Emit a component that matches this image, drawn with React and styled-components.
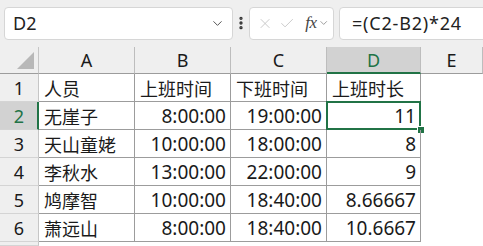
import React from "react";
import styled, { createGlobalStyle } from "styled-components";
import { ChevronDown, EllipsisVertical, X, Check } from "lucide-react";

const GlobalStyle = createGlobalStyle`
  html, body {
    margin: 0;
    padding: 0;
    background: #ffffff;
    overflow: hidden;
  }
  body {
    font-family: "Noto Sans", "Noto Sans CJK SC", sans-serif;
    color: #1a1a1a;
  }
`;

const GREEN = "#217346";
const GRID = "#9c9c9c";

const Page = styled.div`
  width: 483px;
  height: 246px;
  display: flex;
  flex-direction: column;
  background: #ffffff;
  overflow: hidden;
`;

// formula bar across the top
const Toolbar = styled.div`
  height: 47px;
  flex-shrink: 0;
  background: #efefef;
  display: flex;
  align-items: center;
  padding: 0 0 1px 4px;
  box-sizing: border-box;
`;

const Field = styled.div`
  height: 33px;
  box-sizing: border-box;
  background: #ffffff;
  border: 1px solid #d6d6d6;
  border-radius: 4px;
  display: flex;
  align-items: center;
  flex-shrink: 0;
`;

const NameBox = styled(Field)`
  width: 229px;
  padding: 0 7px 0 8px;
  justify-content: space-between;
  font-size: 18px;
  color: #222;
`;

const Dots = styled.div`
  width: 21px;
  display: flex;
  justify-content: center;
  color: #333;
`;

const FxBox = styled(Field)`
  width: 85px;
  padding: 0 4px 0 7px;
  gap: 6px;
  color: #c2c2c2;
`;

const Fx = styled.span`
  font-family: "Liberation Serif", "DejaVu Serif", serif;
  font-style: italic;
  font-size: 17px;
  color: #444;
  margin-left: 4px;
  letter-spacing: -0.5px;
`;

const FormulaBox = styled(Field)`
  width: 160px;
  margin-left: 5px;
  padding-left: 12px;
  font-size: 18px;
  letter-spacing: 0.8px;
  color: #222;
`;

// the sheet
const Sheet = styled.div`
  display: grid;
  grid-template-columns: 39px 96px 96px 96px 94px 1fr;
  grid-template-rows: 27px repeat(6, 28px) 1fr;
  flex: 1;
  min-height: 0;
  font-size: 18px;
`;

const Corner = styled.div`
  background: #efefef;
  border-right: 1px solid #c6c6c6;
  border-bottom: 1px solid ${GRID};
  position: relative;
  &::after {
    content: "";
    position: absolute;
    right: 4px;
    bottom: 4px;
    width: 0;
    height: 0;
    border-left: 17px solid transparent;
    border-bottom: 17px solid #b8b8b8;
  }
`;

const ColHead = styled.div`
  background: ${(p) => (p.$active ? "#d2d2d2" : "#efefef")};
  color: ${(p) => (p.$active ? GREEN : "#1a1a1a")};
  border-right: 1px solid #bdbdbd;
  border-bottom: ${(p) => (p.$active ? `2px solid ${GREEN}` : `1px solid ${GRID}`)};
  display: flex;
  align-items: center;
  justify-content: center;
  padding-top: ${(p) => (p.$active ? "1px" : "0")};
`;

const RowHead = styled.div`
  background: ${(p) => (p.$active ? "#d2d2d2" : "#efefef")};
  color: ${(p) => (p.$active ? GREEN : "#1a1a1a")};
  border-right: ${(p) => (p.$active ? `2px solid ${GREEN}` : "1px solid #c6c6c6")};
  border-bottom: 1px solid #d4d4d4;
  display: flex;
  align-items: center;
  justify-content: center;
  padding-left: ${(p) => (p.$active ? "1px" : "0")};
`;

const Cell = styled.div`
  border-right: ${(p) => (p.$bare ? "none" : `1px solid ${GRID}`)};
  border-bottom: ${(p) => (p.$bare ? "none" : `1px solid ${GRID}`)};
  display: flex;
  align-items: center;
  justify-content: ${(p) => (p.$num ? "flex-end" : "flex-start")};
  padding: 0 4px 0 5px;
  white-space: nowrap;
  position: relative;
  font-size: ${(p) => (p.$num ? "19px" : "18px")};
`;

const Selection = styled.div`
  position: absolute;
  left: -1px;
  top: -1px;
  right: -1px;
  bottom: -1px;
  border: 2px solid ${GREEN};
  pointer-events: none;
  &::after {
    content: "";
    position: absolute;
    right: -5px;
    bottom: -5px;
    width: 6px;
    height: 6px;
    background: ${GREEN};
    border: 1px solid #ffffff;
    border-right: none;
    border-bottom: none;
  }
`;

const columns = ["A", "B", "C", "D", "E"];

const rows = [
  ["人员", "上班时间", "下班时间", "上班时长"],
  ["无崖子", "8:00:00", "19:00:00", "11"],
  ["天山童姥", "10:00:00", "18:00:00", "8"],
  ["李秋水", "13:00:00", "22:00:00", "9"],
  ["鸠摩智", "10:00:00", "18:40:00", "8.66667"],
  ["萧远山", "8:00:00", "18:40:00", "10.6667"],
];

export default function App() {
  return (
    <>
      <GlobalStyle />
      <Page>
        <Toolbar>
          <NameBox>
            <span>D2</span>
            <ChevronDown size={15} color="#555" strokeWidth={1.6} />
          </NameBox>
          <Dots>
            <EllipsisVertical size={16} strokeWidth={3} />
          </Dots>
          <FxBox>
            <X size={17} strokeWidth={1.3} />
            <Check size={17} strokeWidth={1.3} />
            <Fx>fx</Fx>
            <ChevronDown size={12} color="#777" strokeWidth={1.5} style={{ marginLeft: -5 }} />
          </FxBox>
          <FormulaBox>=(C2-B2)*24</FormulaBox>
        </Toolbar>

        <Sheet>
          <Corner />
          {columns.map((c) => (
            <ColHead key={c} $active={c === "D"}>
              {c}
            </ColHead>
          ))}

          {rows.map((r, i) => (
            <React.Fragment key={i}>
              <RowHead $active={i === 1}>{i + 1}</RowHead>
              {r.map((v, j) => (
                <Cell key={j} $num={i > 0 && j > 0}>
                  {v}
                  {i === 1 && j === 3 && <Selection />}
                </Cell>
              ))}
              <Cell $bare />
            </React.Fragment>
          ))}

          <RowHead />
          <Cell $bare />
          <Cell $bare />
          <Cell $bare />
          <Cell $bare />
          <Cell $bare />
        </Sheet>
      </Page>
    </>
  );
}
